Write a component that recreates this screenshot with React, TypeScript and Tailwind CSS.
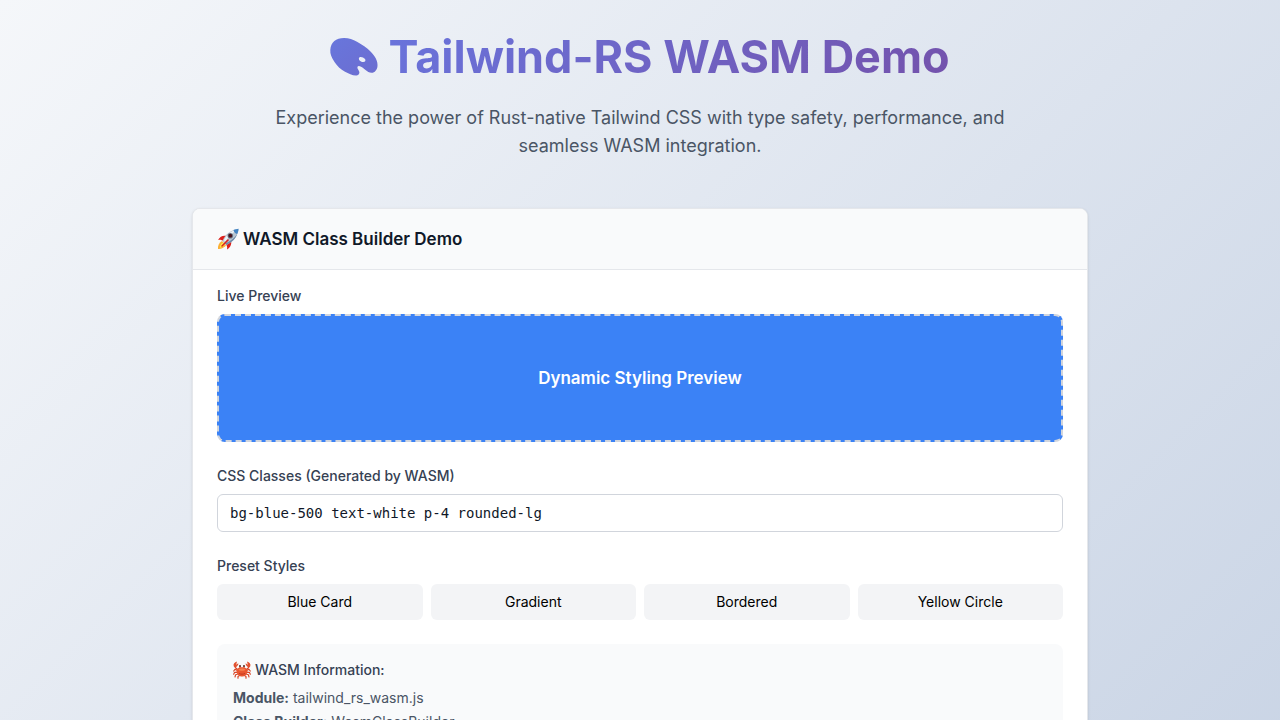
import { useState } from "react";

const presets = [
  { name: "Blue Card", classes: "bg-blue-500 text-white p-4 rounded-lg" },
  { name: "Gradient", classes: "bg-gradient-to-r from-purple-500 to-pink-500 text-white p-4 rounded-lg" },
  { name: "Bordered", classes: "border-2 border-gray-300 p-4 rounded-lg" },
  { name: "Yellow Circle", classes: "bg-yellow-400 p-4 rounded-full" },
];

const info = [
  ["Module:", "tailwind_rs_wasm.js"],
  ["Class Builder:", "WasmClassBuilder"],
];

function Palette() {
  return (
    <svg className="h-10 w-12 shrink-0" viewBox="0 0 48 40" aria-hidden="true">
      <defs>
        <linearGradient id="palette" x1="0" y1="0" x2="1" y2="1">
          <stop offset="0" stopColor="#6876dc" />
          <stop offset="1" stopColor="#6c6dd0" />
        </linearGradient>
      </defs>
      <path
        fill="url(#palette)"
        fillRule="evenodd"
        d="M0.3 13C0.8 5 6 1 14 1C19 1 23 2.600 27 4.800C32 7.500 37 10.800 40.500 14.500C45 19 48 24 47.500 29C47.200 33 44.500 36 41.500 35.800C39 35.700 37.500 34.500 35.500 33C33 31 31 29.300 29 29C27.200 29 27 30.800 28 32.300C30 35 30 37 27.500 38.300C24 39.300 19 37 15 34.800C10.500 32.200 7 29 4.500 25C1.500 20.500 0 17 0.300 13ZM29 21C28.200 23 31 25 33.200 25C35.500 25 36 23.200 34.800 21.800C33.500 20.200 29.800 19 29 21Z"
      />
    </svg>
  );
}

function Rocket() {
  return (
    <svg className="size-[22px] shrink-0" viewBox="0 0 22 22" aria-hidden="true">
      <path fill="#fbb034" d="M1 21C0.500 18 2 14.500 5 13L9 17C8 19.500 4 21 1 21Z" />
      <path fill="#fff04d" d="M3 19.500C3 17 4.500 15 6 14.500L8 16.500C7 18.500 5 19.500 3 19.500Z" />
      <path fill="#dc1f1b" d="M1 12C3 8.500 6 7 10 8L7 13.500C5 12 3 11.500 1 12ZM10 21.500C13.500 19.500 15 16 14 12.500L8.500 15.500C10 17.500 10.500 19.500 10 21.500Z" />
      <path fill="#b9c6d2" d="M5.500 13C8 7 12.500 2 21.500 0.700C21 8.500 15.500 14 9.500 17Z" />
      <path fill="#eef3f6" d="M7 12C9.500 7 13.500 3 20 1.500C15 5.500 11.500 9 8 14Z" />
      <path fill="#4385c4" d="M16.500 2C18 1.200 20 0.800 21.500 0.700C21.500 2.500 21 4.500 20.200 6C18 5.500 17 4 16.500 2Z" />
      <path fill="#6e8daa" d="M9.500 17C15.500 14 19 10 20.200 6C17.500 10 13 13.500 8 15.500Z" />
      <circle cx="13.300" cy="7.700" r="2.800" fill="#6c7785" />
      <circle cx="13.300" cy="7.700" r="1.900" fill="#48131d" />
      <path d="M5 18L11 12" stroke="#dc1f1b" strokeWidth="1.600" strokeLinecap="round" />
    </svg>
  );
}

function Crab() {
  return (
    <svg className="size-[18px] shrink-0" viewBox="0 0 18 18" aria-hidden="true">
      <g fill="none" stroke="#d8482b" strokeWidth="1.200" strokeLinecap="round" strokeLinejoin="round">
        <path d="M4.500 9.500L2 8.300L0.700 10M4.300 11.300L1.600 11.300L0.700 13.300M5 13L2.600 13.800L2 16M6.500 14.500L5 15.500L5 17.200" />
        <path d="M13.500 9.500L16 8.300L17.300 10M13.700 11.300L16.400 11.300L17.300 13.300M13 13L15.400 13.800L16 16M11.500 14.500L13 15.500L13 17.200" />
        <path d="M4.500 8.500L2.300 6.500L2 4M13.500 8.500L15.700 6.500L16 4M7 7V5M11 7V5" />
      </g>
      <path fill="#e2512f" d="M4 0.500C1.500 1 0 3 0.700 5.200C1.200 6.500 3 6.700 3.800 5.500C4.800 4.500 5.500 3.500 5.300 2.200L3.200 3.800ZM14 0.500C16.500 1 18 3 17.300 5.200C16.800 6.500 15 6.700 14.200 5.500C13.200 4.500 12.500 3.500 12.700 2.200L14.800 3.800Z" />
      <path fill="#e95630" d="M3.500 10C3.500 7.500 6 6.300 9 6.300C12 6.300 14.500 7.500 14.500 10C14.500 13 12 15.500 9 15.500C6 15.500 3.500 13 3.500 10Z" />
      <path fill="#f78350" d="M5.500 8.700C7 7.200 11 7.200 12.500 8.700C11.500 10 6.500 10 5.500 8.700Z" />
      <path d="M6 12.300C7.500 13.500 10.500 13.500 12 12.300" fill="none" stroke="#b9321f" strokeWidth="0.800" />
      <circle cx="7" cy="5" r="0.900" fill="#4a241f" />
      <circle cx="11" cy="5" r="0.900" fill="#4a241f" />
    </svg>
  );
}

export default function App() {
  const [classes, setClasses] = useState(presets[0].classes);
  return (
    <div className="min-h-screen bg-linear-[135deg,#f5f7fa,#c9d4e5] pb-8 font-['Inter','Liberation_Sans',sans-serif]">
      <main className="mx-auto max-w-4xl pt-8">
        <header className="mb-12 text-center">
          <h1 className="mb-[22px] flex items-center justify-center gap-2.5 text-[45px] leading-[50px] font-bold">
            <Palette />
            <span className="bg-linear-[135deg,#667eea_-30%,#764ba2_120%] bg-clip-text text-transparent">Tailwind-RS WASM Demo</span>
          </h1>
          <p className="mx-auto max-w-3xl text-lg leading-7 text-gray-600">
            Experience the power of Rust-native Tailwind CSS with type safety, performance, and seamless WASM integration.
          </p>
        </header>
        <section className="overflow-hidden rounded-lg border border-gray-200 bg-white shadow-sm">
          <div className="border-b border-gray-200 bg-gray-50 px-6 py-4">
            <h2 className="flex items-center gap-1 text-[17px] leading-7 font-semibold text-gray-900">
              <Rocket />
              WASM Class Builder Demo
            </h2>
          </div>
          <div className="flex flex-col gap-6 px-6 py-4">
            <div>
              <h3 className="mb-2 text-sm font-medium text-gray-700">Live Preview</h3>
              <div className="flex h-32 items-center justify-center rounded-lg border-2 border-dashed border-gray-300 bg-[#3b82f6] text-[17px] leading-7 font-semibold text-white">
                Dynamic Styling Preview
              </div>
            </div>
            <div>
              <label htmlFor="classes" className="mb-2 block text-sm font-medium text-gray-700">CSS Classes (Generated by WASM)</label>
              <input
                id="classes"
                value={classes}
                onChange={(e) => setClasses(e.target.value)}
                className="block w-full rounded-md border border-gray-300 bg-white px-3 py-2 font-['DejaVu_Sans_Mono',monospace] text-sm text-gray-900"
              />
            </div>
            <div>
              <h3 className="mb-2 text-sm font-medium text-gray-700">Preset Styles</h3>
              <div className="grid grid-cols-4 gap-2">
                {presets.map((p) => (
                  <button key={p.name} type="button" onClick={() => setClasses(p.classes)} className="rounded-md bg-gray-100 px-3 py-2 text-sm text-black">
                    {p.name}
                  </button>
                ))}
              </div>
            </div>
            <div className="rounded-lg bg-gray-50 p-4">
              <h3 className="mb-2 flex items-center gap-1 text-sm font-medium text-gray-700">
                <Crab />
                WASM Information:
              </h3>
              <div className="flex flex-col gap-1 text-sm text-gray-600">
                {info.map(([k, v]) => (
                  <p key={k}>
                    <strong>{k}</strong> {v}
                  </p>
                ))}
              </div>
            </div>
          </div>
        </section>
      </main>
    </div>
  );
}
